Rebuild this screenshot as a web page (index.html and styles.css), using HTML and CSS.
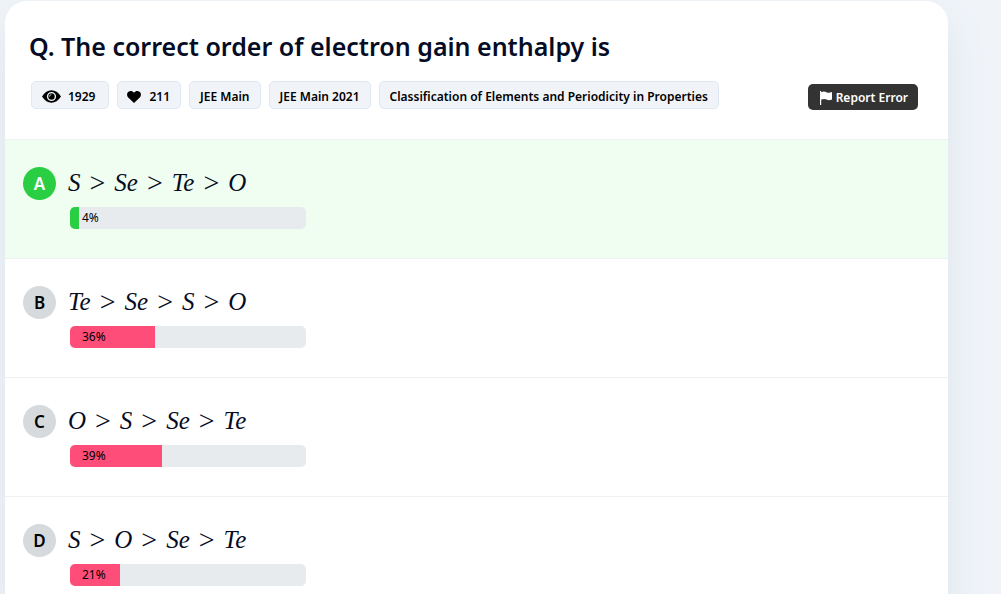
FILE: index.html
```html
<!DOCTYPE html>
<html lang="en">
<head>
<meta charset="utf-8">
<meta name="viewport" content="width=device-width, initial-scale=1">
<title>The correct order of electron gain enthalpy is</title>
<link rel="stylesheet" href="styles.css">
</head>
<body>
<main class="card">
  <header class="question">
    <h1 class="title">Q. The correct order of electron gain enthalpy is</h1>
    <div class="meta">
      <div class="tags">
        <span class="tag tag-views"><svg class="eye" viewBox="0 0 19 13" aria-hidden="true"><path fill-rule="evenodd" d="M0 6.500Q4 .3 9.500.3T19 6.500Q15 12.700 9.500 12.700T0 6.500ZM9.500 1.900a4.600 4.600 0 1 0 0 9.200 4.600 4.600 0 0 0 0-9.200Z"/><circle cx="9.500" cy="6.500" r="3.200"/><path d="M7.500 6.600Q7.600 4.700 9.400 4.500" fill="none" stroke="#fff" stroke-width=".7"/></svg>1929</span>
        <span class="tag tag-likes"><svg class="heart" viewBox="0 0 14 12" aria-hidden="true"><path d="M7 12 1.200 6.500C-.5 4.700-.2 2 1.500.8 3.300-.5 5.700 0 7 1.800 8.300 0 10.700-.5 12.500.8 14.200 2 14.500 4.700 12.800 6.500Z"/></svg>211</span>
        <a class="tag" href="#main">JEE Main</a>
        <a class="tag" href="#main-2021">JEE Main 2021</a>
        <a class="tag" href="#chapter">Classification of Elements and Periodicity in Properties</a>
      </div>
      <button class="report" type="button"><svg class="flag" viewBox="0 0 12 14" aria-hidden="true"><path d="M0 0h1.200v1.200C3.500.2 5 .5 6.500 1.200S9.500 2 12 1v7.500c-2.500 1-4 .7-5.500 0S3.500 7.800 1.200 8.600V14H0Z"/></svg>Report Error</button>
    </div>
  </header>
  <ol class="options">
    <li class="option correct">
      <span class="letter">A</span>
      <div class="answer">
        <div class="formula"><i>S</i><b>&gt;</b><i>Se</i><b>&gt;</b><i>Te</i><b>&gt;</b><i>O</i></div>
        <div class="bar"><div class="fill" style="width:4%"></div><span class="percent">4%</span></div>
      </div>
    </li>
    <li class="option">
      <span class="letter">B</span>
      <div class="answer">
        <div class="formula"><i>Te</i><b>&gt;</b><i>Se</i><b>&gt;</b><i>S</i><b>&gt;</b><i>O</i></div>
        <div class="bar"><div class="fill" style="width:36%"></div><span class="percent">36%</span></div>
      </div>
    </li>
    <li class="option">
      <span class="letter">C</span>
      <div class="answer">
        <div class="formula"><i>O</i><b>&gt;</b><i>S</i><b>&gt;</b><i>Se</i><b>&gt;</b><i>Te</i></div>
        <div class="bar"><div class="fill" style="width:39%"></div><span class="percent">39%</span></div>
      </div>
    </li>
    <li class="option">
      <span class="letter">D</span>
      <div class="answer">
        <div class="formula"><i>S</i><b>&gt;</b><i>O</i><b>&gt;</b><i>Se</i><b>&gt;</b><i>Te</i></div>
        <div class="bar"><div class="fill" style="width:21%"></div><span class="percent">21%</span></div>
      </div>
    </li>
  </ol>
</main>
</body>
</html>
```
FILE: styles.css
```css
* { box-sizing: border-box; }
body {
  margin: 0;
  padding: 1px 53px 0 5px;
  background: #f0f4f9;
  color: #000;
  font-family: "Noto Sans", "Open Sans", sans-serif;
  overflow-x: hidden;
}
.card {
  background: #fff;
  border-radius: 22px;
  box-shadow: 0 20px 40px rgba(90, 125, 135, 0.12);
  overflow: hidden;
}
.question { padding: 27px 30px 29px 24px; }
.title {
  margin: 0;
  color: #050c24;
  font-size: 25px;
  font-weight: 620;
  line-height: 36px;
}
.meta {
  display: flex;
  justify-content: space-between;
  align-items: flex-start;
  gap: 16px;
  padding: 17px 0 0 2px;
}
.tags { display: flex; flex-wrap: wrap; gap: 8px; }
.tag {
  display: flex;
  align-items: center;
  height: 28px;
  padding: 3px 10px 0;
  border: 1px solid #dfe7f0;
  border-radius: 5px;
  background: #f0f4f9;
  color: #000;
  font-size: 12px;
  font-weight: 600;
  line-height: 18px;
  text-decoration: none;
}
.tag-views { gap: 7px; padding: 3px 13px 0 10px; }
.tag-likes { gap: 8px; padding: 3px 10px 0 9px; }
.eye { width: 19px; height: 13px; }
.heart { width: 14px; height: 12px; }
.report {
  display: flex;
  align-items: center;
  gap: 4px;
  height: 26px;
  margin-top: 3px;
  padding: 1px 10px 0 12px;
  border: 0;
  border-radius: 5px;
  background: #333;
  color: #fff;
  font: 600 12px/18px "Noto Sans", "Open Sans", sans-serif;
  white-space: nowrap;
}
.flag { width: 12px; height: 14px; fill: #fff; }
.options { margin: 0; padding: 0; list-style: none; }
.option {
  display: flex;
  gap: 12px;
  padding: 27px 18px 29px;
  border-top: 1px solid #eef1f3;
}
.correct { background: #effef1; }
.letter {
  display: flex;
  align-items: center;
  justify-content: center;
  flex: none;
  width: 33px;
  height: 33px;
  border-radius: 50%;
  background: #d6dadd;
  font-size: 17px;
  font-weight: 600;
}
.correct .letter { background: #2ace43; color: #fff; }
.formula {
  display: flex;
  align-items: center;
  gap: 9px;
  height: 32px;
  color: #050c24;
  font-family: "Liberation Serif", serif;
  font-size: 25px;
  line-height: 32px;
}
.formula b { font-size: 28px; font-weight: 400; }
.bar {
  display: flex;
  position: relative;
  width: 236px;
  height: 22px;
  margin: 8px 0 0 2px;
  border-radius: 5px;
  background: #e8ebee;
  overflow: hidden;
}
.fill { background: #ff4d79; }
.correct .fill { background: #2ace43; }
.percent {
  position: absolute;
  left: 12px;
  font-size: 12px;
  line-height: 22px;
}
```
